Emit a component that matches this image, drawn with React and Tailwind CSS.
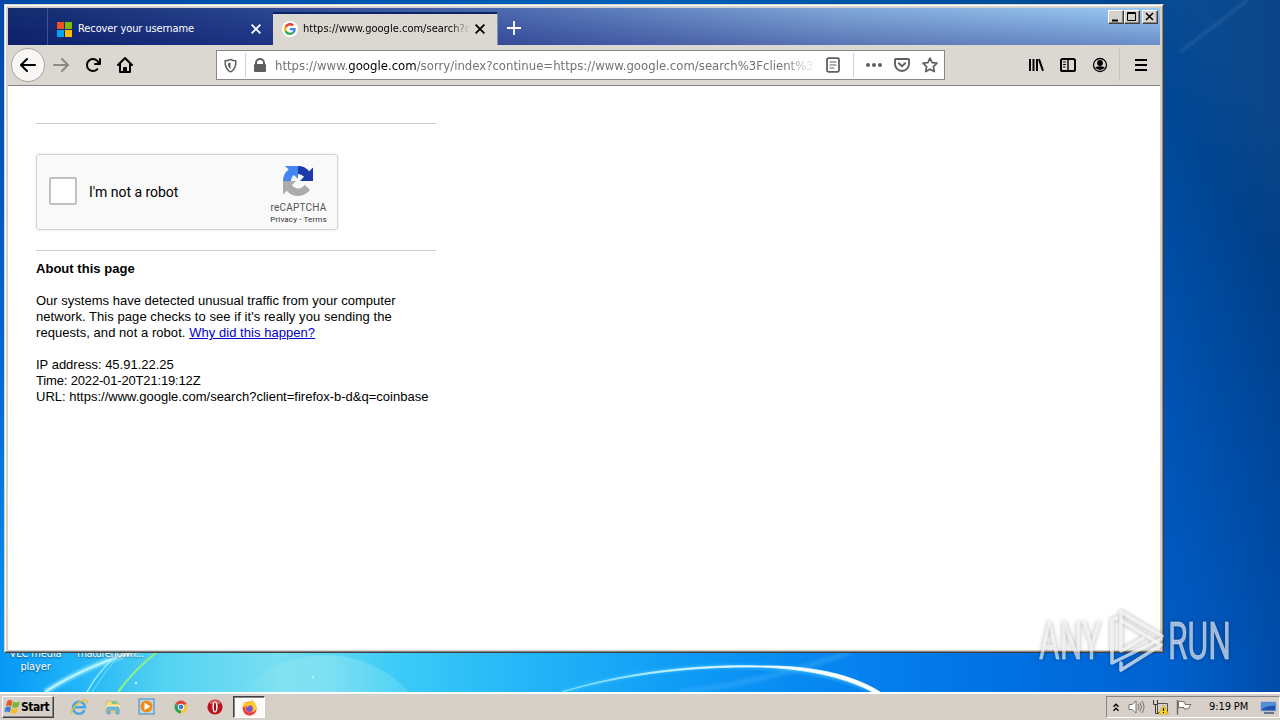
import clsx from 'clsx';

const ICONS = {
  back: 'M15 7H3.414l4.293-4.293a1 1 0 0 0-1.414-1.414l-6 6a1 1 0 0 0 0 1.414l6 6a1 1 0 0 0 1.414-1.414L3.414 9H15a1 1 0 0 0 0-2z',
  reload: 'M15 1a1 1 0 0 0-1 1v2.418A6.995 6.995 0 1 0 8 15a6.954 6.954 0 0 0 4.95-2.05 1 1 0 0 0-1.414-1.414A5.019 5.019 0 1 1 12.549 6H10a1 1 0 0 0 0 2h5a1 1 0 0 0 1-1V2a1 1 0 0 0-1-1z',
  home: 'M15.707 7.293l-7-7a1 1 0 0 0-1.414 0l-7 7a1 1 0 0 0 1.414 1.414L2 8.414V15a1 1 0 0 0 1 1h10a1 1 0 0 0 1-1V8.414l.293.293a1 1 0 0 0 1.414-1.414zM12 14H10v-3a1 1 0 0 0-1-1H7a1 1 0 0 0-1 1v3H4V6.414l4-4 4 4z',
};

function Icon({ path, className }) {
  return (
    <svg viewBox="0 0 16 16" className={clsx('size-4 shrink-0', className)} fill="currentColor">
      <path d={path} />
    </svg>
  );
}

function StrokeIcon({ children, className, width = 2 }) {
  return (
    <svg
      viewBox="0 0 16 16"
      className={clsx('size-4 shrink-0', className)}
      fill="none"
      stroke="currentColor"
      strokeWidth={width}
      strokeLinecap="round"
      strokeLinejoin="round"
    >
      {children}
    </svg>
  );
}

function Wallpaper() {
  return (
    <svg className="absolute inset-0 size-full" viewBox="0 0 1280 720" preserveAspectRatio="none">
      <defs>
        <linearGradient id="left" x1="0" y1="0" x2="0" y2="1">
          <stop offset="0" stopColor="#0048a8" />
          <stop offset="0.5" stopColor="#0568d0" />
          <stop offset="1" stopColor="#0a9cf8" />
        </linearGradient>
        <linearGradient id="top" x1="0" y1="0" x2="1" y2="0">
          <stop offset="0" stopColor="#0048a8" />
          <stop offset="0.5" stopColor="#0060b8" />
          <stop offset="0.88" stopColor="#00468f" />
          <stop offset="1" stopColor="#0b4884" />
        </linearGradient>
        <linearGradient id="right" x1="0.25" y1="0" x2="0" y2="1">
          <stop offset="0" stopColor="#0c4788" />
          <stop offset="0.18" stopColor="#004088" />
          <stop offset="0.5" stopColor="#004ca6" />
          <stop offset="0.8" stopColor="#0056bc" />
          <stop offset="1" stopColor="#005cc6" />
        </linearGradient>
        <linearGradient id="shade" x1="0" y1="0" x2="1" y2="0">
          <stop offset="0" stopColor="#0070e0" stopOpacity="0.15" />
          <stop offset="1" stopColor="#003880" stopOpacity="0.2" />
        </linearGradient>
        <linearGradient id="bottom" x1="0" y1="0" x2="1" y2="0">
          <stop offset="0" stopColor="#0698f6" />
          <stop offset="0.06" stopColor="#22b4f8" />
          <stop offset="0.13" stopColor="#55d3f2" />
          <stop offset="0.22" stopColor="#78dff2" />
          <stop offset="0.31" stopColor="#3ccbf7" />
          <stop offset="0.42" stopColor="#22b4f8" />
          <stop offset="0.55" stopColor="#0c98f6" />
          <stop offset="0.68" stopColor="#0580ee" />
          <stop offset="0.79" stopColor="#0070e2" />
          <stop offset="0.91" stopColor="#0062d0" />
          <stop offset="1" stopColor="#004ca8" />
        </linearGradient>
        <linearGradient id="arc" x1="0" y1="0" x2="1" y2="0">
          <stop offset="0" stopColor="#7fe0ff" />
          <stop offset="0.6" stopColor="#e8fbff" />
          <stop offset="1" stopColor="#ffffff" />
        </linearGradient>
        <linearGradient id="glow" x1="0" y1="0" x2="1" y2="0">
          <stop offset="0" stopColor="#c0f4ee" stopOpacity="0" />
          <stop offset="0.5" stopColor="#c0f4ee" stopOpacity="0.3" />
          <stop offset="1" stopColor="#b0f0f6" stopOpacity="0.2" />
        </linearGradient>
        <filter id="soft" x="-20%" y="-50%" width="140%" height="200%">
          <feGaussianBlur stdDeviation="1.4" />
        </filter>
      </defs>
      <rect width="1280" height="720" fill="url(#left)" />
      <rect width="1280" height="6" fill="url(#top)" />
      <rect x="1160" width="120" height="720" fill="url(#right)" />
      <rect x="1160" width="120" height="720" fill="url(#shade)" />
      <rect y="650" width="1280" height="70" fill="url(#bottom)" />
      <path d="M1180 52 L1248 0" stroke="#4c82b8" strokeOpacity="0.45" strokeWidth="2" filter="url(#soft)" />
      <path d="M240 692 C270 662 300 655 330 655 C365 657 395 675 408 692Z" fill="url(#glow)" />
      <path d="M45 692 Q85 666 140 650" stroke="#a6f2ff" strokeWidth="4" fill="none" filter="url(#soft)" />
      <path d="M45 692 Q85 666 140 650" stroke="#d8fbff" strokeWidth="1.2" fill="none" />
      <path d="M87 692 Q98 672 114 658" stroke="#9eeeff" strokeWidth="1.4" fill="none" />
      <path d="M92 692 Q104 672 122 652" stroke="#6ae0fa" strokeWidth="1" fill="none" />
      <path d="M118 692 Q134 670 157 652" stroke="#8ef088" strokeWidth="2.2" fill="none" />
      <path d="M680 692 Q760 684 850 652" stroke="#5cc0ff" strokeOpacity="0.25" strokeWidth="6" fill="none" filter="url(#soft)" />
      <path d="M562 692 C620 674 690 664 760 667 C815 670 850 680 876 693" stroke="#3fc4ff" strokeWidth="4" strokeOpacity="0.6" fill="none" filter="url(#soft)" />
      <path d="M562 692 C620 675 690 666 760 667 C815 669 850 680 873 692 L880 692 C855 676 815 665 760 666 C690 664 620 674 562 692Z" fill="url(#arc)" stroke="url(#arc)" strokeWidth="0.8" />
      <circle cx="136" cy="683" r="1.2" fill="#c8f8ff" />
      <circle cx="313" cy="677" r="1" fill="#c8f8ff" />
    </svg>
  );
}

function GoogleLogo() {
  return (
    <svg viewBox="0 0 48 48" className="size-3 shrink-0">
      <path fill="#EA4335" d="M24 9.5c3.54 0 6.71 1.22 9.21 3.6l6.85-6.85C35.9 2.38 30.47 0 24 0 14.62 0 6.51 5.38 2.56 13.22l7.98 6.19C12.43 13.72 17.74 9.5 24 9.5z" />
      <path fill="#4285F4" d="M46.98 24.55c0-1.57-.15-3.09-.38-4.55H24v9.02h12.94c-.58 2.96-2.26 5.48-4.78 7.18l7.73 6c4.51-4.18 7.09-10.36 7.09-17.65z" />
      <path fill="#FBBC05" d="M10.53 28.59c-.48-1.45-.76-2.99-.76-4.59s.27-3.14.76-4.59l-7.98-6.19C.92 16.46 0 20.12 0 24s.92 7.54 2.56 10.78l7.97-6.19z" />
      <path fill="#34A853" d="M24 48c6.48 0 11.93-2.13 15.89-5.81l-7.73-6c-2.15 1.45-4.92 2.3-8.16 2.3-6.26 0-11.57-4.22-13.47-9.91l-7.98 6.19C6.51 42.62 14.62 48 24 48z" />
    </svg>
  );
}

function CloseGlyph({ className }) {
  return (
    <svg viewBox="0 0 10 10" className={clsx('size-[10px] shrink-0', className)} stroke="currentColor" strokeWidth="1.8">
      <path d="M.6 .6L9.4 9.4M9.4 .6L.6 9.4" />
    </svg>
  );
}

function CaptionButton({ children }) {
  return (
    <button className="flex h-[14px] w-4 items-center justify-center border border-t-white border-l-white border-r-[#404040] border-b-[#404040] bg-[#d6d3ce] shadow-[inset_-1px_-1px_0_#858585]">
      <svg viewBox="0 0 14 12" className="h-3 w-[14px]" fill="none" stroke="#000">
        {children}
      </svg>
    </button>
  );
}

function TabStrip() {
  return (
    <div className="flex h-[37px] bg-[linear-gradient(to_bottom,rgba(255,255,255,0.04),rgba(20,20,110,0.32)),linear-gradient(to_right,#0a246a_0%,#213f8c_22%,#4767ae_44%,#7ba3d6_72%,#95c8f4_100%)]">
      <div className="w-10 border-r border-[#3a549a]" />
      <div className="flex w-[225px] items-center pt-[5px] pr-3 pl-[9px]">
        <div className="grid size-[15px] shrink-0 grid-cols-2 gap-px">
          <span className="bg-[#f25022]" />
          <span className="bg-[#7fba00]" />
          <span className="bg-[#00a4ef]" />
          <span className="bg-[#ffb900]" />
        </div>
        <span className="ml-[6px] flex-1 pt-px text-[11px] tracking-[-0.09px] whitespace-nowrap text-white">Recover your username</span>
        <CloseGlyph className="text-white" />
      </div>
      <div className="mt-1 flex w-[225px] items-center border-t-2 border-r border-t-[#0a246a] border-r-[#8a93ac] bg-[#dbd8d2] pr-3 pb-px pl-[9px]">
        <span className="flex size-4 shrink-0 items-center justify-center rounded-full bg-white">
          <GoogleLogo />
        </span>
        <span className="ml-[5px] w-[167px] pt-px text-[11px] tracking-[0.02px] whitespace-nowrap text-black [mask-image:linear-gradient(to_right,#000_88%,transparent)]">
          https://www.google.com/search?c
        </span>
        <CloseGlyph className="ml-[5px] text-black" />
      </div>
      <div className="flex w-8 items-center justify-center pt-[3px]">
        <svg viewBox="0 0 14 14" className="size-[14px]" stroke="#fff" strokeWidth="1.8">
          <path d="M7 0V14M0 7H14" />
        </svg>
      </div>
      <div className="ml-auto flex pt-[2px] pr-[2px]">
        <CaptionButton><path d="M3 9.5H9" strokeWidth="2" /></CaptionButton>
        <CaptionButton><path d="M2.5 1.5H10.5V9.5H2.5ZM2 2.5H11" /></CaptionButton>
        <div className="w-[2px]" />
        <CaptionButton><path d="M3 2L10 9M10 2L3 9" strokeWidth="1.5" /></CaptionButton>
      </div>
    </div>
  );
}

function UrlBar() {
  return (
    <div className="ml-[83px] flex h-[30px] w-[729px] items-center border border-[#87868a] bg-white pl-[6px] text-[#5f5f62]">
      <StrokeIcon width={1.6} className="size-[15px]">
        <path d="M8 1.5C6 2.7 4 3 2.3 3C2 9 4 13 8 14.8C12 13 14 9 13.7 3C12 3 10 2.7 8 1.5Z" />
        <path d="M8 4.8C7 5.3 6.2 5.5 5.2 5.6C5.3 8.4 6.2 10.4 8 11.6Z" fill="currentColor" stroke="none" />
      </StrokeIcon>
      <div className="ml-[7px] h-6 w-px bg-[#d0d0d0]" />
      <svg viewBox="0 0 14 14" className="ml-[7px] size-[14px] shrink-0" fill="currentColor">
        <path d="M2 6V5A5 5 0 0 1 12 5V6A1 1 0 0 1 13 7V13A1 1 0 0 1 12 14H2A1 1 0 0 1 1 13V7A1 1 0 0 1 2 6ZM4 6H10V5A3 3 0 0 0 4 5Z" />
      </svg>
      <div className="ml-2 w-[541px] pt-px text-[13px] tracking-[0.01px] whitespace-nowrap text-[#737373] [mask-image:linear-gradient(to_right,#000_94%,transparent)]">
        https://www.<span className="text-black">google.com</span>/sorry/index?continue=https://www.google.com/search%3Fclient%3D
      </div>
      <StrokeIcon width={1.8} className="ml-[9px]">
        <rect x="2" y="1.2" width="12" height="13.6" rx="1.5" />
        <path d="M5 5H11M5 8H11M5 11H9" strokeWidth="1.1" />
      </StrokeIcon>
      <div className="ml-3 h-6 w-px bg-[#d0d0d0]" />
      <svg viewBox="0 0 16 16" className="ml-3 size-4 shrink-0" fill="currentColor">
        <circle cx="2" cy="8" r="2" />
        <circle cx="8" cy="8" r="2" />
        <circle cx="14" cy="8" r="2" />
      </svg>
      <StrokeIcon width={1.9} className="ml-3">
        <path d="M1.8 2H14.2A.9 .9 0 0 1 15 3V7A7 7 0 0 1 1 7V3A.9 .9 0 0 1 1.8 2Z" />
        <path d="M4.8 6.2L8 9.2L11.2 6.2" />
      </StrokeIcon>
      <StrokeIcon width={1.7} className="ml-3">
        <path d="M8 1.2L10.1 5.6L15 6.2L11.4 9.6L12.3 14.6L8 12.2L3.7 14.6L4.6 9.6L1 6.2L5.9 5.6Z" />
      </StrokeIcon>
    </div>
  );
}

function NavBar() {
  return (
    <div className="flex h-[41px] items-center border-b border-[#868482] bg-[#dbd8d2] pl-[3px] text-black">
      <button className="flex size-[34px] items-center justify-center rounded-full border border-[#a5a39f] bg-[#f8f7f6]">
        <Icon path={ICONS.back} />
      </button>
      <Icon path={ICONS.back} className="ml-2 rotate-180 text-[#8b8986]" />
      <Icon path={ICONS.reload} className="ml-4" />
      <Icon path={ICONS.home} className="ml-4" />
      <UrlBar />
      <svg viewBox="0 0 16 16" className="ml-[83px] size-4 shrink-0" stroke="#000" strokeWidth="2">
        <path d="M2 2V14M5.5 2V14M9 2V14M11 2.2L15 13.8" />
      </svg>
      <StrokeIcon className="ml-4">
        <rect x="1" y="2" width="14" height="12" rx="1.6" />
        <path d="M8 2V14" strokeWidth="1.4" />
        <path d="M3.5 5H5.5M3.5 7.5H5.5M3.5 10H5" strokeWidth="1" />
      </StrokeIcon>
      <svg viewBox="0 0 16 16" className="ml-4 size-4 shrink-0">
        <circle cx="8" cy="8" r="6.5" fill="none" stroke="#000" strokeWidth="1.3" />
        <circle cx="8" cy="6" r="2.9" />
        <path d="M3.2 10.2Q8 8.4 12.8 10.2Q11.2 13 8 13Q4.8 13 3.2 10.2Z" />
      </svg>
      <div className="ml-[11px] h-8 w-px bg-[#c6c3be]" />
      <svg viewBox="0 0 12 12" className="ml-[15px] size-3 shrink-0" stroke="#000" strokeWidth="2">
        <path d="M0 1H12M0 6H12M0 11H12" />
      </svg>
    </div>
  );
}

function Captcha() {
  return (
    <div className="flex h-[76px] w-[302px] rounded-[3px] border border-[#d3d3d3] bg-[#f9f9f9] pl-3 shadow-[0_0_3px_rgba(0,0,0,0.1)]">
      <div className="mt-[22px] size-7 shrink-0 rounded-xs border-2 border-[#c1c1c1] bg-white" />
      <div className="mt-[27px] ml-3 w-[170px] font-[Roboto,sans-serif] text-[14px] leading-5 tracking-[-0.03px] whitespace-nowrap text-black">I'm not a robot</div>
      <div className="flex w-[78px] flex-col items-center text-[#555]">
        <svg viewBox="0 0 32 32" className="mt-[10px] size-8 shrink-0">
          <path fill="#1c3aa9" d="M31 16V2.6L27.3 6.3A15 15 0 0 0 16 1V9A8 8 0 0 1 22 11.8L18 16Z" />
          <path fill="#4285f4" d="M16 1H3L6.6 4.6A15 15 0 0 0 1 16H9Q9 12 12 10L16 14Z" />
          <path fill="#ababab" d="M1 16V29.4L4.7 25.7A15 15 0 0 0 28 25L22.6 19.8A7.4 7.4 0 0 1 10 20L14 16Z" />
        </svg>
        <div className="mt-[5px] pl-px font-[Roboto,sans-serif] text-[10px] leading-3 tracking-[0.2px]">reCAPTCHA</div>
        <div className="pt-px pl-px font-[Roboto,sans-serif] text-[8px] leading-[10px] tracking-[0.14px] whitespace-nowrap text-[#333]">Privacy - Terms</div>
      </div>
    </div>
  );
}

function PageContent() {
  return (
    <main className="flex-1 bg-white pt-[37px] pl-7 font-['Liberation_Sans',Arial,sans-serif] text-[13px] leading-4 text-black">
      <hr className="mb-[30px] w-[400px] border-[#ccc]" />
      <Captcha />
      <hr className="mt-5 mb-[10px] w-[400px] border-[#ccc]" />
      <h1 className="font-bold tracking-[0.03px]">About this page</h1>
      <p className="mt-4 whitespace-nowrap">
        <span className="tracking-[0.01px]">Our systems have detected unusual traffic from your computer</span>
        <br />
        <span className="tracking-[0.06px]">network. This page checks to see if it's really you sending the</span>
        <br />
        <span className="tracking-[0.05px]">requests, and not a robot. <a className="text-[#0000cc] underline">Why did this happen?</a></span>
      </p>
      <p className="mt-4 whitespace-nowrap">
        <span>IP address: 45.91.22.25</span>
        <br />
        <span className="tracking-[-0.16px]">Time: 2022-01-20T21:19:12Z</span>
        <br />
        <span>URL: https://www.google.com/search?client=firefox-b-d&amp;q=coinbase</span>
      </p>
    </main>
  );
}

function BrowserWindow() {
  return (
    <div className="absolute top-1 left-1 flex h-[649px] w-[1160px] flex-col border border-t-[#d6d3ce] border-l-[#d6d3ce] border-r-[#404040] border-b-[#404040] bg-[#d6d3ce]">
      <div className="flex flex-1 flex-col border border-t-white border-l-white border-r-[#858585] border-b-[#858585] p-[2px] pb-px">
        <TabStrip />
        <NavBar />
        <PageContent />
      </div>
    </div>
  );
}

function Watermark() {
  return (
    <svg viewBox="0 0 200 70" className="absolute top-[605px] left-[1035px] h-[70px] w-[200px] overflow-visible drop-shadow-[0_0_2px_rgba(0,0,0,0.45)]">
      <g fill="#fff" fillOpacity="0.62" stroke="#fff" strokeOpacity="0.4" strokeWidth="0.8" className="font-[Roboto,sans-serif] text-[51px] font-normal">
        <text x="4" y="54" textLength="62" lengthAdjust="spacingAndGlyphs">ANY</text>
        <text x="133" y="54" textLength="63" lengthAdjust="spacingAndGlyphs">RUN</text>
      </g>
      <g fill="none" stroke="#fff" strokeOpacity="0.68" strokeWidth="3.6" strokeLinejoin="round" strokeLinecap="round">
        <path d="M127 31L86 7V46L108 33" />
        <path d="M82 13L77 15V58L126 34" />
        <path d="M87 16L126 40L86 65V58" />
      </g>
    </svg>
  );
}

function QuickLaunch() {
  return (
    <div className="flex items-center">
      <svg viewBox="0 0 18 18" className="ml-4 size-[18px]" fill="none">
        <path d="M14.5 12.2A6 6 0 1 1 15 9.2H4" stroke="#4aa6de" strokeWidth="2.5" />
        <path d="M2 16C-1 12 12 0 16.4 2.3Q18 3 16 6" stroke="#e8bf38" strokeWidth="1.3" />
      </svg>
      <svg viewBox="0 0 18 18" className="ml-4 size-[18px]">
        <path d="M2 3H7L8 5H15V14H2Z" fill="#f2d986" stroke="#cdae58" strokeWidth=".7" />
        <path d="M8 3H13V6H8Z" fill="#85c18e" />
        <path d="M2 7H16V11H2Z" fill="#f9e9a9" />
        <path d="M3 16V10Q3 9 4 9H14Q15 9 15 10V16H12V12H6V16Z" fill="#74b9df" stroke="#4e94bd" strokeWidth=".6" />
      </svg>
      <svg viewBox="0 0 18 18" className="ml-4 size-[18px]">
        <rect x="1" y="1" width="15" height="15" fill="#b8d9ef" stroke="#4184bd" />
        <circle cx="8.5" cy="8.5" r="6" fill="#f38b12" />
        <path d="M6.5 4.8L12.3 8.5L6.5 12.2Z" fill="#fff" />
      </svg>
      <svg viewBox="0 0 18 18" className="ml-4 size-[18px]">
        <path d="M9 9L3.4 5.8A6.5 6.5 0 0 1 14.6 5.8Z" fill="#df4437" />
        <path d="M9 9V15.5A6.5 6.5 0 0 1 3.4 5.8Z" fill="#2d9f55" />
        <path d="M9 9L14.6 5.8A6.5 6.5 0 0 1 9 15.5Z" fill="#f7c92f" />
        <circle cx="9" cy="9" r="3.2" fill="#fff" />
        <circle cx="9" cy="9" r="2.4" fill="#427fd2" />
      </svg>
      <svg viewBox="0 0 18 18" className="ml-4 size-[18px]">
        <circle cx="9" cy="9" r="7.6" fill="#b9151c" />
        <path d="M3 5A7.6 7.6 0 0 1 15 5Q9 8 3 5Z" fill="#e26665" />
        <ellipse cx="9" cy="9" rx="2.6" ry="5.6" fill="#fff" />
        <ellipse cx="9" cy="9" rx="1.1" ry="4.4" fill="#9b1117" />
      </svg>
    </div>
  );
}

function Taskbar() {
  return (
    <div className="absolute inset-x-0 bottom-0 flex h-7 items-center border-t-2 border-white bg-[#d6d0c8] pl-[2px] text-[11px] text-black">
      <button className="flex h-[22px] w-[52px] items-center border border-t-white border-l-white border-r-[#404040] border-b-[#404040] pl-px shadow-[inset_-1px_-1px_0_#858585]">
        <svg viewBox="0 0 16 15" className="h-4 w-[17px] shrink-0">
          <path d="M3 2Q5.5 0 8 2L6.8 7Q4.5 5.4 1.8 6.8Z" fill="#e8582b" />
          <path d="M8.7 2.4Q11.5 4.3 15 2.2L13.6 7.3Q10.3 9 7.5 7.3Z" fill="#79b83a" />
          <path d="M1.6 7.6Q4.2 6.2 6.6 7.8L5.4 12.6Q3 11 .3 12.5Z" fill="#3c7fd2" />
          <path d="M7.3 8.2Q10.2 9.9 13.4 8.2L12 13.2Q9 14.8 6 13Z" fill="#f5bd2c" />
        </svg>
        <span className="text-[12px] font-bold tracking-[-0.5px]">Start</span>
      </button>
      <QuickLaunch />
      <div className="ml-[9px] flex h-[22px] w-8 items-center justify-center border border-t-[#404040] border-l-[#404040] border-r-white border-b-white bg-[#fbfaf9] shadow-[inset_1px_1px_0_#858585]">
        <svg viewBox="0 0 18 18" className="size-[17px]">
          <circle cx="9" cy="10" r="7.4" fill="#ff8a20" />
          <path d="M2 6Q3 3 4 3L5 5Q8 3 10 4Q10 1 12 1Q17 5 16.4 11Q15.5 17 9 17.4Q15 13 12 8Q8 5 2 9Z" fill="#ffce35" />
          <path d="M2 8Q2 17 9 17.4Q16 17 16.4 10Q14 15 9 14.5Q4 14 4 9Z" fill="#f03650" />
          <circle cx="8.8" cy="10" r="3.5" fill="#7552d0" />
          <path d="M4 7Q7 5 10 7Q7 8 7 9Z" fill="#ffa322" />
        </svg>
      </div>
      <div className="ml-auto flex h-[22px] w-[174px] items-center border border-t-[#858585] border-l-[#858585] border-r-white border-b-white pl-[6px]">
        <svg viewBox="0 0 6 9" className="h-[9px] w-[6px] shrink-0" fill="none" stroke="#000" strokeWidth="1.4">
          <path d="M.5 3.7L3 1.2L5.5 3.7M.5 7.8L3 5.3L5.5 7.8" />
        </svg>
        <svg viewBox="0 0 17 16" className="ml-[9px] h-4 w-[17px] shrink-0" fill="none" stroke="#77736e" strokeWidth="1">
          <path d="M1 5.5H4L8 2V14L4 10.5H1Z" fill="#fff" />
          <path d="M10 5Q12 8 10 11M12 3.5Q15 8 12 12.5M14 2Q18 8 14 14" />
        </svg>
        <svg viewBox="0 0 17 16" className="ml-[7px] h-4 w-[17px] shrink-0">
          <path d="M5.5 4.5H15.5V13.5H5.5Z" fill="#d4d1ce" stroke="#54504d" />
          <path d="M1.5 1V5.5H5.5V1M3.5 5.5V14.5H8" fill="none" stroke="#3d3a38" />
          <path d="M11.5 6L16.5 15H6.5Z" fill="#ffd62a" stroke="#c39a0a" strokeWidth=".6" />
          <path d="M11.5 9V12M11.5 13V14" stroke="#000" strokeWidth="1.2" />
        </svg>
        <svg viewBox="0 0 16 16" className="ml-[7px] size-4 shrink-0" fill="#fff" stroke="#706c68">
          <path d="M1.5 1V15.5" strokeWidth="1.5" />
          <path d="M2.5 2.5Q6 1.5 9 3.5V5.5H15L12 10H8V8.5H2.5Z" />
        </svg>
        <span className="ml-[17px] w-[43px] pt-px tracking-[-0.1px] whitespace-nowrap">9:19 PM</span>
        <svg viewBox="0 0 17 15" className="ml-2 h-[15px] w-[17px] shrink-0">
          <path d="M1 2H16V11H1Z" fill="#1d55ae" stroke="#9eb7d6" />
          <path d="M2 3H15V6Q8 5 2 9Z" fill="#4f92dc" />
          <path d="M4 13H14" stroke="#334c70" strokeWidth="1.4" />
        </svg>
      </div>
    </div>
  );
}

export default function App() {
  return (
    <div className="relative h-[720px] w-[1280px] overflow-hidden font-['DejaVu_Sans_Condensed','DejaVu_Sans',sans-serif]">
      <Wallpaper />
      {/* desktop icon labels, partly behind the window */}
      <div className="absolute top-[647px] left-0 flex text-center text-[11px] leading-[13px] tracking-[-0.15px] text-white [text-shadow:0_1px_2px_rgba(0,0,0,0.5)]">
        <div className="w-[71px]">VLC media<br />player</div>
        <div className="w-[79px] tracking-[-0.4px] whitespace-nowrap">maturenown...</div>
      </div>
      <BrowserWindow />
      <Watermark />
      <Taskbar />
    </div>
  );
}
